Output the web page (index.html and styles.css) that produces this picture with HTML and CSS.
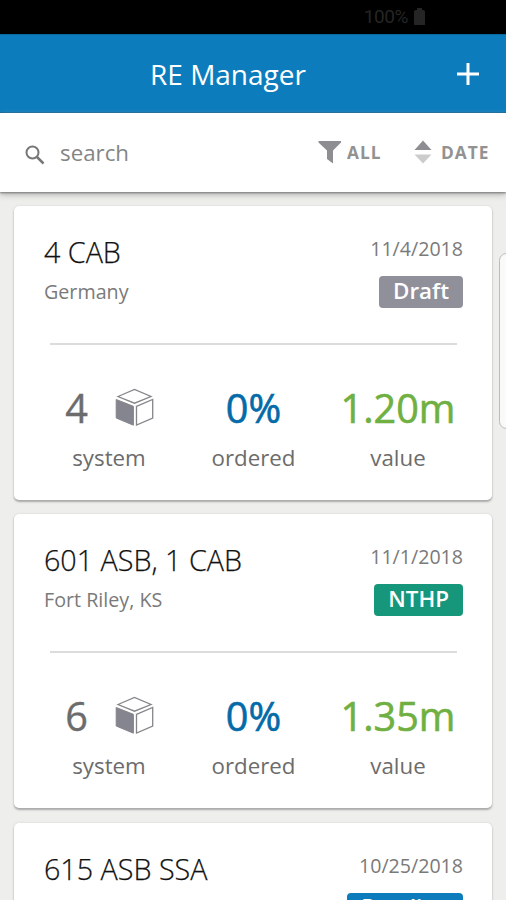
FILE: index.html
```html
<!DOCTYPE html>
<html lang="en">
<head>
<meta charset="utf-8">
<title>RE Manager</title>
<link rel="stylesheet" href="styles.css">
</head>
<body>
<svg class="defs" width="0" height="0">
  <symbol id="cube" viewBox="0 0 40 40">
    <path d="M3 8.500 19.500 1.500 36 8.500 19.500 15.200Z" fill="#fff" stroke="#85858a" stroke-width="1.3"/>
    <path d="M1.200 11.500 18.400 18.300V37.200L1.200 30Z" fill="#85858f" stroke="#85858a" stroke-width="1"/>
    <path d="M21.500 18.300 37.700 11.500V30L21.500 37Z" fill="#fff" stroke="#85858a" stroke-width="1.3"/>
  </symbol>
</svg>
<div class="status"><span>100%</span>
  <svg width="13" height="18" viewBox="0 0 13 18"><path d="M1 3.500Q1 2 3 2H4V0H9V2H10Q12 2 12 3.500V17H1Z" fill="#252525"/></svg>
</div>
<header class="appbar">
  <h1>RE Manager</h1>
  <svg class="plus" width="24" height="24" viewBox="0 0 24 24"><path d="M12 1V23M1 12H23" stroke="#fff" stroke-width="3"/></svg>
</header>
<div class="toolbar">
  <svg class="glass" width="20" height="20" viewBox="0 0 20 20" fill="none" stroke="#777"><circle cx="7.500" cy="7.500" r="6" stroke-width="2"/><path d="M12 12 18.500 18.500" stroke-width="2.500"/></svg>
  <span class="search">search</span>
  <svg class="funnel" width="24" height="24" viewBox="0 0 24 24"><path d="M.5 1H23V2.500L15 10.500V23.500L9 19V10.500L.5 2.500Z" fill="#8d8d92"/></svg>
  <span class="label all">ALL</span>
  <svg class="sort" width="18" height="24" viewBox="0 0 18 24"><path d="M9 .5 17.500 10H.5Z" fill="#8d8d92"/><path d="M.5 14.500H17.500L9 23.500Z" fill="#ccc"/></svg>
  <span class="label">DATE</span>
</div>
<main class="list">
  <article class="card">
    <div class="top"><div><h2>4 CAB</h2><p>Germany</p></div><div class="meta"><time>11/4/2018</time><span class="badge draft">Draft</span></div></div>
    <hr>
    <div class="stats">
      <div class="stat"><div class="num count"><span>4</span><svg width="40" height="40"><use href="#cube"/></svg></div><div class="cap">system</div></div>
      <div class="stat"><div class="num blue">0%</div><div class="cap">ordered</div></div>
      <div class="stat"><div class="num green">1.20m</div><div class="cap">value</div></div>
    </div>
  </article>
  <article class="card">
    <div class="top"><div><h2>601 ASB, 1 CAB</h2><p>Fort Riley, KS</p></div><div class="meta"><time>11/1/2018</time><span class="badge nthp">NTHP</span></div></div>
    <hr>
    <div class="stats">
      <div class="stat"><div class="num count"><span>6</span><svg width="40" height="40"><use href="#cube"/></svg></div><div class="cap">system</div></div>
      <div class="stat"><div class="num blue">0%</div><div class="cap">ordered</div></div>
      <div class="stat"><div class="num green">1.35m</div><div class="cap">value</div></div>
    </div>
  </article>
  <article class="card last">
    <div class="top"><div><h2>615 ASB SSA</h2></div><div class="meta"><time>10/25/2018</time><span class="badge pending">Pending</span></div></div>
  </article>
</main>
<div class="handle"></div>
</body>
</html>
```

FILE: styles.css
```css
* { box-sizing: border-box; }
body { margin: 0; height: 900px; overflow: hidden; position: relative; display: flex; flex-direction: column; background: #eeeeec; font-family: "Open Sans", sans-serif; color: #6c6c6c; }
.defs { position: absolute; }
h1, h2, p { margin: 0; font-weight: 400; }
.status { height: 34px; flex: none; background: #000; color: #252525; font: 19px/38px Roboto, sans-serif; letter-spacing: -.4px; display: flex; align-items: center; justify-content: flex-end; gap: 5px; padding-right: 80px; }
.appbar { height: 79px; flex: none; background: #0d7cbc; border-top: 1px solid #086a9f; border-bottom: 1px solid #0a649a; display: grid; grid-template-columns: 1fr 50px; align-items: center; color: #fff; }
.appbar h1 { text-align: center; font-size: 28px; line-height: 40px; }
.toolbar { height: 79px; flex: none; z-index: 1; background: #fff; display: flex; align-items: center; padding: 0 0 1px 25px; box-shadow: 0 1px 2px #777, 0 3px 6px #bbb; }
.glass { margin-top: 6px; }
.search { font-size: 22.300px; margin-left: 15px; color: #858585; width: 258px; }
.label { font-size: 17.300px; font-weight: 700; letter-spacing: 1px; color: #929292; }
.funnel { margin-right: 5px; }
.all { width: 67px; }
.sort { margin-right: 9px; }
.list { flex: 1; min-height: 0; overflow: hidden; padding: 14px 14px 0; }
.card { height: 294px; margin-bottom: 14.400px; border-radius: 5px; background: #fff; padding: 26px 29px 0 30px; box-shadow: 0 2px 2px #aaa, 0 0 2px #ccc; }
.last { height: 90px; border-radius: 5px 5px 0 0; margin: 0; }
.top { height: 111px; display: flex; justify-content: space-between; }
h2 { font-size: 28.700px; line-height: 40px; color: #111; font-weight: 300; -webkit-text-stroke: .25px #111; }
p { font-size: 19.700px; line-height: 40px; color: #7a7a7a; }
.meta { display: flex; flex-direction: column; align-items: flex-end; }
time { font-size: 19.600px; line-height: 33px; color: #7a7a7a; }
.badge { margin-top: 11px; height: 32px; padding: 0 14px; border-radius: 4px; color: #fff; font-size: 22.400px; line-height: 30px; font-weight: 600; }
.draft { background: #8f909a; }
.nthp { background: #16967a; }
.pending { background: #0d7cbc; line-height: 28px; }
hr { margin: 0 6px; border: 0; height: 2px; background: #dcdcdc; }
.stats { padding-top: 38px; display: grid; grid-template-columns: 130px 159px 130px; }
.stat { text-align: center; }
.num { height: 50px; line-height: 50px; font-size: 39.600px; -webkit-text-stroke: .6px currentColor; }
.count { display: flex; align-items: center; justify-content: center; gap: 27px; padding-left: 2px; -webkit-text-stroke-width: .4px; }
.blue { color: #046ba8; }
.green { color: #70b042; }
.cap { margin-top: 8px; font-size: 22.300px; line-height: 34px; }
.handle { position: absolute; right: -8px; top: 253px; width: 15px; height: 176px; border: 1px solid #bbb; border-radius: 8px; background: #fafafa; z-index: 2; }
```
